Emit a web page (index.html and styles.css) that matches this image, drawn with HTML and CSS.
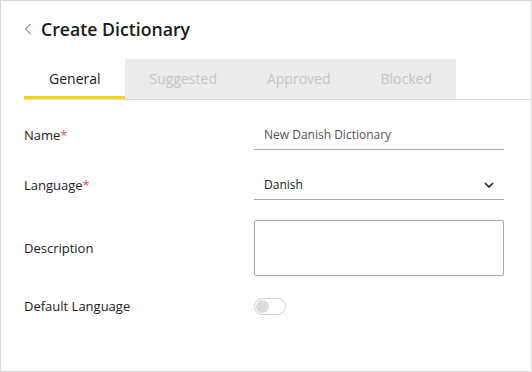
FILE: index.html
```html
<html>

<head>
    <link rel="stylesheet" href="styles.css">
</head>

<body>
    <div class="panel">
        <div class="panel-header">
            <a href="#" class="back">
                <svg width="8" height="12" viewBox="0 0 8 12"><path d="M6.5 1 L1.5 6 L6.5 11" fill="none" stroke="#9a9a9a" stroke-width="1.2"/></svg>
            </a>
            <h1>Create Dictionary</h1>
        </div>

        <ul class="tabs">
            <li class="tab is-active">General</li>
            <li class="tab">Suggested</li>
            <li class="tab">Approved</li>
            <li class="tab">Blocked</li>
        </ul>

        <form class="form">
            <div class="form-row">
                <label>Name<span class="req">*</span></label>
                <div class="field field-line">New Danish Dictionary</div>
            </div>
            <div class="form-row">
                <label>Language<span class="req">*</span></label>
                <div class="field field-line field-select">
                    <span>Danish</span>
                    <svg width="10" height="6" viewBox="0 0 10 6"><path d="M1 1 L5 5 L9 1" fill="none" stroke="#222" stroke-width="1.6"/></svg>
                </div>
            </div>
            <div class="form-row">
                <label>Description</label>
                <div class="field field-box"></div>
            </div>
            <div class="form-row form-row-toggle">
                <label>Default Language</label>
                <div class="toggle"><span class="toggle-knob"></span></div>
            </div>
        </form>
    </div>
</body>

</html>
```

FILE: styles.css
```css
* {
    -webkit-box-sizing: border-box;
    -moz-box-sizing: border-box;
    box-sizing: border-box;
}

body {
    margin: 0;
    font-family: 'Open Sans', sans-serif;
    color: #222;
}

.panel {
    width: 532px;
    height: 372px;
    border: solid 1px #d6d6d6;
    background: #fff;
}

.panel-header {
    display: flex;
    align-items: center;
    height: 58px;
    padding-left: 23px;
    padding-bottom: 2px;
}

.back {
    display: flex;
    margin-right: 9px;
}

.panel-header h1 {
    margin: 0;
    font-size: 17.7px;
    font-weight: 600;
    color: #1a1a1a;
}

.tabs {
    list-style: none;
    margin: 0 0 0 23px;
    padding: 0;
    display: flex;
    border-bottom: solid 1px #d9d9d9;
}

.tab {
    height: 40px;
    padding: 0 24px 0 25px;
    line-height: 40px;
    font-size: 14px;
    background: #ebebeb;
    color: #c6c6c6;
    border-bottom: solid 3px transparent;
}

.tab:nth-child(2),
.tab:nth-child(3) {
    padding: 0 25px 0 25px;
}

.tab.is-active {
    background: #fff;
    color: #1a1a1a;
    border-bottom-color: #f5d800;
}

.form {
    margin: 0;
    padding: 20px 0 0 23px;
    display: flex;
    flex-direction: column;
    gap: 20px;
}

.form-row {
    display: flex;
    align-items: center;
}

.form-row label {
    width: 230px;
    font-size: 13px;
    color: #222;
}

.req {
    color: #e8475f;
}

.field {
    width: 250px;
    font-size: 12px;
}

.field-line {
    height: 30px;
    padding: 0 10px;
    display: flex;
    align-items: center;
    border-bottom: solid 1px #a8a8a8;
    color: #555;
}

.field-select {
    justify-content: space-between;
    color: #222;
}

.field-box {
    height: 56px;
    border: solid 1px #a8a8a8;
    border-radius: 2px;
}

.form-row-toggle {
    height: 20px;
}

.toggle {
    width: 32px;
    height: 17px;
    border: solid 1px #cfcfcf;
    border-radius: 9px;
    padding: 1px;
}

.toggle-knob {
    display: block;
    width: 13px;
    height: 13px;
    border-radius: 50%;
    background: #dcdcdc;
}
```
